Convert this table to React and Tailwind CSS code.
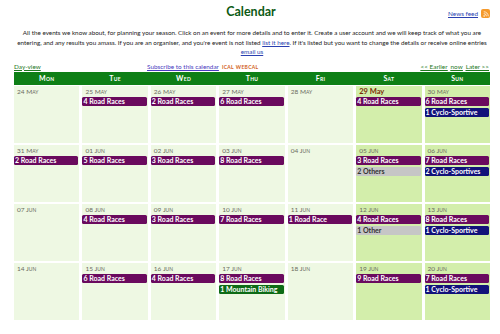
import React from "react";

const weeks = [
  [
    { d: "24", m: "May", ev: [] },
    { d: "25", m: "May", ev: [["4 Road Races", "p"]] },
    { d: "26", m: "May", ev: [["2 Road Races", "p"]] },
    { d: "27", m: "May", ev: [["6 Road Races", "p"]] },
    { d: "28", m: "May", ev: [] },
    { d: "29", m: "May", today: true, ev: [["4 Road Races", "p"]] },
    { d: "30", m: "May", ev: [["6 Road Races", "p"], ["1 Cyclo-Sportive", "n"]] },
  ],
  [
    { d: "31", m: "May", ev: [["2 Road Races", "p"]] },
    { d: "01", m: "Jun", ev: [["5 Road Races", "p"]] },
    { d: "02", m: "Jun", ev: [["3 Road Races", "p"]] },
    { d: "03", m: "Jun", ev: [["8 Road Races", "p"]] },
    { d: "04", m: "Jun", ev: [] },
    { d: "05", m: "Jun", ev: [["3 Road Races", "p"], ["2 Others", "g"]] },
    { d: "06", m: "Jun", ev: [["7 Road Races", "p"], ["2 Cyclo-Sportives", "n"]] },
  ],
  [
    { d: "07", m: "Jun", ev: [] },
    { d: "08", m: "Jun", ev: [["4 Road Races", "p"]] },
    { d: "09", m: "Jun", ev: [["3 Road Races", "p"]] },
    { d: "10", m: "Jun", ev: [["7 Road Races", "p"]] },
    { d: "11", m: "Jun", ev: [["1 Road Race", "p"]] },
    { d: "12", m: "Jun", ev: [["4 Road Races", "p"], ["1 Other", "g"]] },
    { d: "13", m: "Jun", ev: [["8 Road Races", "p"], ["1 Cyclo-Sportive", "n"]] },
  ],
  [
    { d: "14", m: "Jun", ev: [] },
    { d: "15", m: "Jun", ev: [["6 Road Races", "p"]] },
    { d: "16", m: "Jun", ev: [["4 Road Races", "p"]] },
    { d: "17", m: "Jun", ev: [["8 Road Races", "p"], ["1 Mountain Biking", "m"]] },
    { d: "18", m: "Jun", ev: [] },
    { d: "19", m: "Jun", ev: [["9 Road Races", "p"]] },
    { d: "20", m: "Jun", ev: [["7 Road Races", "p"], ["1 Cyclo-Sportive", "n"]] },
  ],
];

const days = ["Mon", "Tue", "Wed", "Thu", "Fri", "Sat", "Sun"];

const barStyles = {
  p: "bg-[#6a0a5e] text-white",
  n: "bg-[#12127a] text-white",
  g: "bg-[#c6c6c6] text-[#333]",
  m: "bg-[#0d6b16] text-white",
};

function Cell({ cell, weekend }) {
  return (
    <div
      className={`h-[57px] flex flex-col ${weekend ? "bg-[#d3eeab]" : "bg-[#eef8e3]"}`}
    >
      {cell.today ? (
        <div className="h-[10px] pl-[3px] pt-[1px] text-[7.5px] leading-[9px] font-bold text-[#7a2a06]">
          {cell.d} {cell.m}
        </div>
      ) : (
        <div className="h-[10px] pl-[3px] pt-[1px] text-[6.5px] leading-[9px] text-[#6b6b5e] [font-variant:small-caps]">
          {cell.d} {cell.m}
        </div>
      )}
      <div className="flex flex-col gap-[2px] pt-[1px] pr-[1px]">
        {cell.ev.map(([label, kind]) => (
          <div
            key={label}
            className={`h-[9px] rounded-[1.5px] pl-[1px] text-[7px] leading-[9px] font-bold whitespace-nowrap overflow-hidden ${barStyles[kind]}`}
          >
            {label}
          </div>
        ))}
      </div>
    </div>
  );
}

export default function App() {
  return (
    <div className="w-[500px] h-[334px] bg-white pl-[14px] pr-[10px] font-['Lato','Open_Sans',sans-serif] text-[#222]">
      {/* Title */}
      <div className="grid grid-cols-[1fr_auto_1fr] items-center pt-[3px] h-[20px]">
        <div />
        <h1 className="text-[12.5px] font-bold text-[#0c5a14] -ml-[2px]">
          Calendar
        </h1>
        <div className="flex items-center justify-end gap-[3px] pt-[3px]">
          <a className="text-[6.4px] text-[#2a3fb0] underline">News feed</a>
          <span className="w-[9px] h-[9px] rounded-[2px] bg-[#f59a2c] flex items-center justify-center">
            <svg viewBox="0 0 8 8" className="w-[6px] h-[6px]">
              <circle cx="1.5" cy="6.5" r="1" fill="white" />
              <path d="M1 3.5a3.5 3.5 0 0 1 3.5 3.5" stroke="white" strokeWidth="1" fill="none" />
              <path d="M1 1a6 6 0 0 1 6 6" stroke="white" strokeWidth="1" fill="none" />
            </svg>
          </span>
        </div>
      </div>

      {/* Intro */}
      <p className="mt-[8px] -mx-[10px] text-center text-[6.3px] leading-[9.5px] whitespace-nowrap">
        All the events we know about, for planning your season. Click on an event for more details and to enter it. Create a user account and we will keep track of what you are
        <br />
        entering, and any results you amass. If you are an organiser, and you're event is not listed{" "}
        <a className="text-[#2a3fb0] underline">list it here</a>. If it's listed but you want to change the details or receive online entries
        <br />
        <a className="text-[#2a3fb0] underline">email us</a>
      </p>

      {/* Links */}
      <div className="flex items-end mt-[4px] h-[10px] text-[6.4px] leading-[9px]">
        <a className="w-[133px] text-[#1e7a1e] underline">Day-view</a>
        <a className="text-[#4a3bc0] underline">Subscribe to this calendar</a>
        <span className="ml-[3px] text-[#d2601a] font-bold text-[6.5px] [font-variant:small-caps] tracking-[0.3px]">
          ical webcal
        </span>
        <div className="flex-1" />
        <div className="flex gap-[3px] text-[#1e7a1e] underline pr-[1px]">
          <a>&lt;&lt; Earlier</a>
          <a>now</a>
          <a>Later &gt;&gt;</a>
        </div>
      </div>

      {/* Calendar */}
      <div className="mt-[1px] grid grid-cols-7 gap-x-[3px] bg-[#0e7f16] h-[13px] items-center">
        {days.map((d) => (
          <div
            key={d}
            className="text-center text-white font-bold text-[7px] [font-variant:small-caps] tracking-[0.3px]"
          >
            {d}
          </div>
        ))}
      </div>
      <div className="mt-[1px] flex flex-col gap-[2px]">
        {weeks.map((w, i) => (
          <div key={i} className="grid grid-cols-7 gap-x-[3px]">
            {w.map((c, j) => (
              <Cell key={j} cell={c} weekend={j >= 5} />
            ))}
          </div>
        ))}
      </div>
    </div>
  );
}
